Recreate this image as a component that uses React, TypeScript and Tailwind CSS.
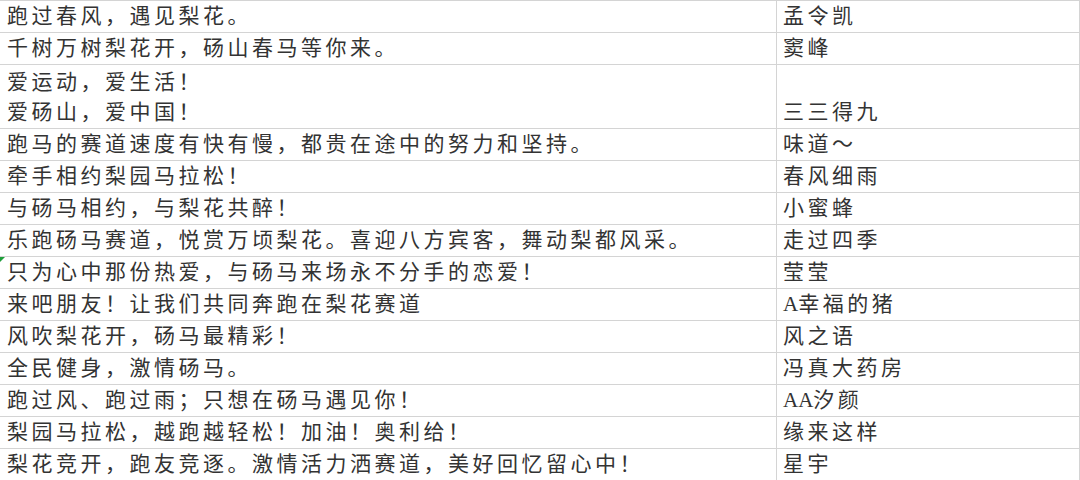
import React from "react";

type Row = { lines: string[]; name: string; tall?: boolean; mark?: boolean };

const rows: Row[] = [
  { lines: ["跑过春风，遇见梨花。"], name: "孟令凯" },
  { lines: ["千树万树梨花开，砀山春马等你来。"], name: "窦峰" },
  { lines: ["爱运动，爱生活！", "爱砀山，爱中国！"], name: "三三得九", tall: true },
  { lines: ["跑马的赛道速度有快有慢，都贵在途中的努力和坚持。"], name: "味道～" },
  { lines: ["牵手相约梨园马拉松！"], name: "春风细雨" },
  { lines: ["与砀马相约，与梨花共醉！"], name: "小蜜蜂" },
  { lines: ["乐跑砀马赛道，悦赏万顷梨花。喜迎八方宾客，舞动梨都风采。"], name: "走过四季" },
  { lines: ["只为心中那份热爱，与砀马来场永不分手的恋爱！"], name: "莹莹", mark: true },
  { lines: ["来吧朋友！让我们共同奔跑在梨花赛道"], name: "A幸福的猪" },
  { lines: ["风吹梨花开，砀马最精彩！"], name: "风之语" },
  { lines: ["全民健身，激情砀马。"], name: "冯真大药房" },
  { lines: ["跑过风、跑过雨；只想在砀马遇见你！"], name: "AA汐颜" },
  { lines: ["梨园马拉松，越跑越轻松！加油！奥利给！"], name: "缘来这样" },
  { lines: ["梨花竞开，跑友竞逐。激情活力洒赛道，美好回忆留心中！"], name: "星宇" },
];

// latin letters in the names sit tight, without the CJK spacing
function Name({ text }: { text: string }) {
  const m = text.match(/^([A-Za-z]+)(.*)$/);
  if (!m) return <div>{text}</div>;
  return (
    <div>
      <span className="tracking-[0px]">{m[1]}</span>
      {m[2]}
    </div>
  );
}

export default function App() {
  return (
    <div
      className="w-[1080px] h-[480px] overflow-hidden bg-white text-[#333333] text-[21px] tracking-[3.5px]"
      style={{ fontFamily: '"Liberation Serif", "Noto Sans CJK SC", serif' }}
    >
      {rows.map((r, i) => (
        <div
          key={i}
          className={`relative grid grid-cols-[776px_1fr] border-t border-[#d4d4d4] ${r.tall ? "h-[64px]" : "h-[32px]"}`}
        >
          {r.mark && (
            <div className="absolute left-0 top-0 w-0 h-0 border-t-[5px] border-r-[5px] border-t-[#1e9e3a] border-r-transparent" />
          )}
          <div className="flex flex-col justify-end pl-[7px] pb-[1px] leading-[30px] whitespace-nowrap">
            {r.lines.map((l, j) => (
              <div key={j}>{l}</div>
            ))}
          </div>
          <div className="flex flex-col justify-end pl-[6px] pb-[1px] leading-[30px] border-l border-r border-[#d4d4d4] whitespace-nowrap">
            <Name text={r.name} />
          </div>
        </div>
      ))}
    </div>
  );
}
